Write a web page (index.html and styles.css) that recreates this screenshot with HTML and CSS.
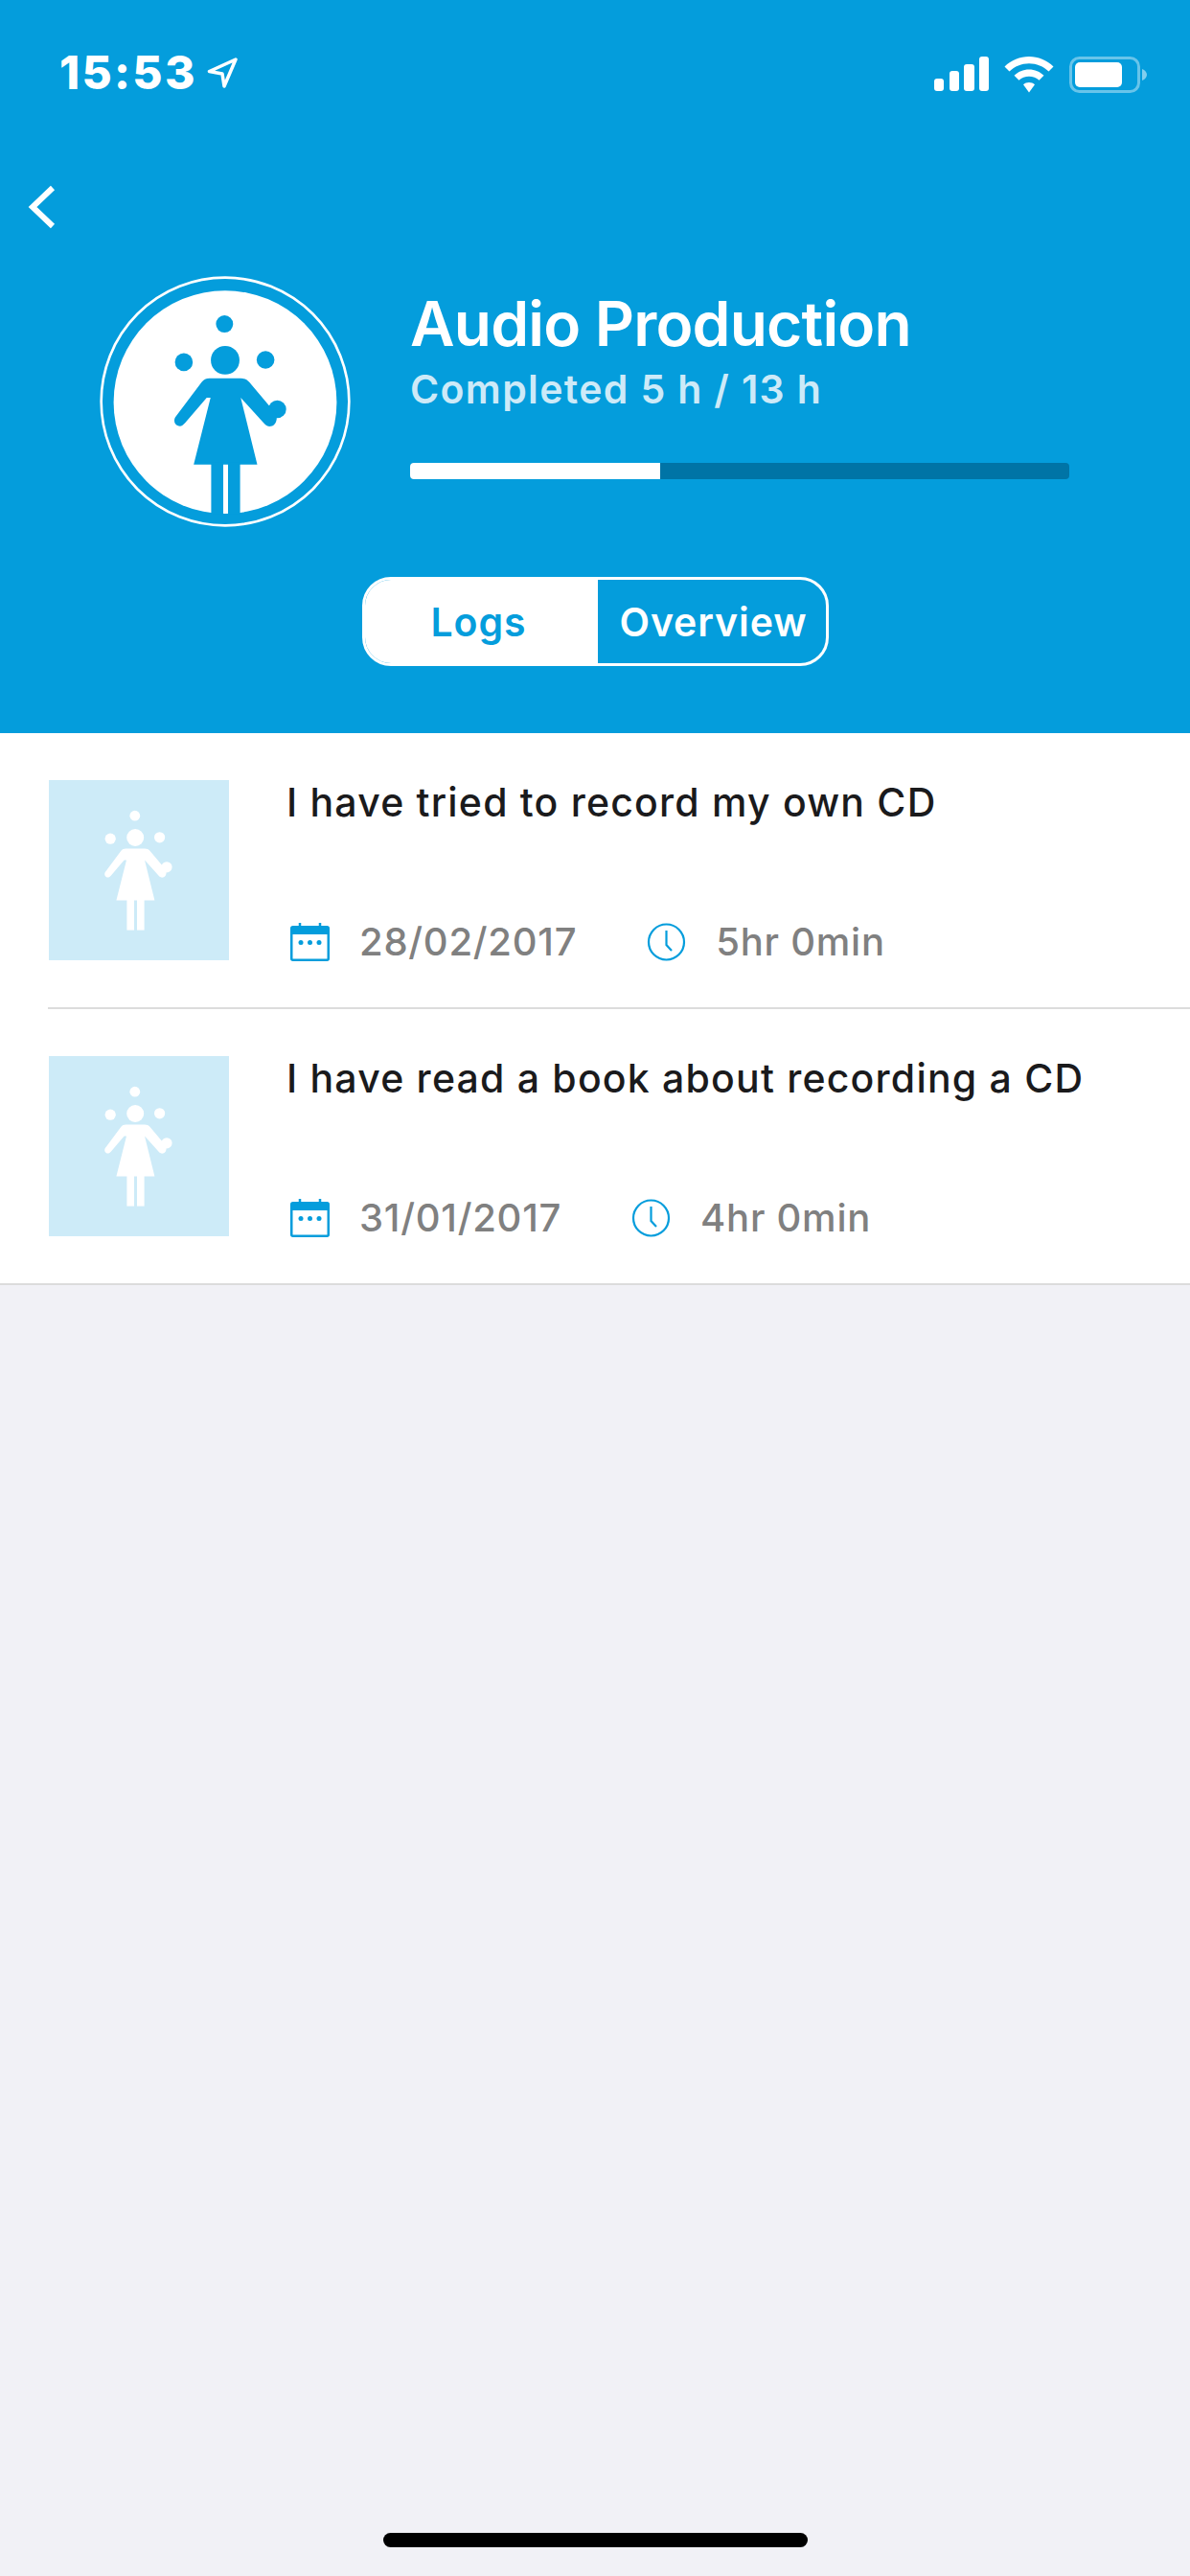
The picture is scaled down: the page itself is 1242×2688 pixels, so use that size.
FILE: index.html
```html
<!DOCTYPE html>
<html lang="en">
<head>
<meta charset="utf-8">
<title>Audio Production</title>
<link rel="stylesheet" href="styles.css">
</head>
<body>
<div class="screen">
  <header class="header">
    <div class="status">
      <div class="status-left">
        <span class="clock-time">15:53</span>
        <svg class="loc" viewBox="0 0 32 32"><path d="M30 2 L2.500 14.500 L16 17 L18 30 Z" fill="none" stroke="#fff" stroke-width="3.500" stroke-linejoin="round"/></svg>
      </div>
      <div class="status-right">
        <svg class="signal" viewBox="0 0 57 36"><rect x="0" y="23" width="10" height="13" rx="3"/><rect x="16" y="15" width="10" height="21" rx="3"/><rect x="31" y="8" width="11" height="28" rx="3"/><rect x="47" y="0" width="10" height="36" rx="3"/></svg>
        <svg class="wifi" viewBox="0 0 52 38"><path d="M26 0C35.500 0 44.500 3.800 51.500 10.500L46.500 15.500C41 10.200 33.800 7.200 26 7.200S11 10.200 5.500 15.500L0.500 10.500C7.500 3.800 16.500 0 26 0Z"/><path d="M26 13.500C32 13.500 37.500 15.800 41.500 19.800L36.500 24.800C33.700 22.200 30 20.700 26 20.700S18.300 22.200 15.500 24.800L10.500 19.800C14.500 15.800 20 13.500 26 13.500Z"/><path d="M26 27C28.300 27 30.300 27.800 32 29.300L26 37.500L20 29.300C21.700 27.800 23.700 27 26 27Z"/></svg>
        <svg class="battery" viewBox="0 0 82 38"><rect x="1.500" y="1.500" width="71" height="35" rx="9" fill="none" stroke="#fff" stroke-opacity=".4" stroke-width="3"/><rect x="6" y="6" width="49" height="26" rx="5" fill="#fff"/><path d="M76 13C79 14 81 16.500 81 19S79 24 76 25Z" fill="#fff" fill-opacity=".5"/></svg>
      </div>
    </div>
    <div class="back-row">
      <svg class="back" viewBox="0 0 30 46"><path d="M26 3 L5 23 L26 43" fill="none" stroke="#fff" stroke-width="6"/></svg>
    </div>
    <div class="hero">
      <svg class="logo" viewBox="39 39 790 790">
        <circle cx="434" cy="434" r="390" fill="none" stroke="#fff" stroke-width="8"/>
        <circle cx="434" cy="436" r="351" fill="#fff"/>
        <g id="juggler">
          <circle cx="432" cy="190" r="27"/>
          <circle cx="304" cy="310" r="28"/>
          <circle cx="561" cy="303" r="28"/>
          <circle cx="434" cy="304" r="45"/>
          <circle cx="598" cy="458" r="28"/>
          <path d="M385 361H483C495 361 503 365 510 373L590 468C603 484 594 510 578 512C568 513 561 508 555 501L483 422L535 632H335L388 422H376L308 501C302 508 295 513 288 511C274 508 270 492 279 481L360 373C367 365 373 361 385 361Z"/>
          <rect x="390" y="625" width="38" height="162"/>
          <rect x="443" y="625" width="38" height="162"/>
        </g>
      </svg>
      <div class="hero-info">
        <h1 class="hero-title">Audio Production</h1>
        <p class="hero-sub">Completed 5 h / 13 h</p>
        <div class="progress"><div class="progress-fill"></div></div>
      </div>
    </div>
    <div class="tabs">
      <div class="tab tab-active">Logs</div>
      <div class="tab">Overview</div>
    </div>
  </header>
  <main class="list">
    <article class="row">
      <svg class="thumb" viewBox="-17 4 940 940"><use href="#juggler"/></svg>
      <div class="row-body">
        <h2 class="row-title">I have tried to record my own CD</h2>
        <div class="meta">
          <svg class="meta-icon" viewBox="0 0 41 40"><path d="M10 0V5M31 0V5" stroke="#049ddc" stroke-width="2.500"/><rect x="1.250" y="4.250" width="38.500" height="34.500" rx="1.500" fill="none" stroke="#049ddc" stroke-width="2.500"/><rect x="1" y="4" width="39" height="8" fill="#049ddc"/><circle cx="11" cy="20.500" r="2.500" fill="#049ddc"/><circle cx="20.500" cy="20.500" r="2.500" fill="#049ddc"/><circle cx="30" cy="20.500" r="2.500" fill="#049ddc"/></svg>
          <span class="meta-text">28/02/2017</span>
          <svg class="meta-icon meta-clock" viewBox="0 0 41 40"><circle cx="20.500" cy="20" r="18.500" fill="none" stroke="#049ddc" stroke-width="2.200"/><path d="M20.500 8V23L26 29" fill="none" stroke="#049ddc" stroke-width="2.200"/></svg>
          <span class="meta-text">5hr 0min</span>
        </div>
      </div>
    </article>
    <article class="row">
      <svg class="thumb" viewBox="-17 4 940 940"><use href="#juggler"/></svg>
      <div class="row-body">
        <h2 class="row-title">I have read a book about recording a CD</h2>
        <div class="meta">
          <svg class="meta-icon" viewBox="0 0 41 40"><path d="M10 0V5M31 0V5" stroke="#049ddc" stroke-width="2.500"/><rect x="1.250" y="4.250" width="38.500" height="34.500" rx="1.500" fill="none" stroke="#049ddc" stroke-width="2.500"/><rect x="1" y="4" width="39" height="8" fill="#049ddc"/><circle cx="11" cy="20.500" r="2.500" fill="#049ddc"/><circle cx="20.500" cy="20.500" r="2.500" fill="#049ddc"/><circle cx="30" cy="20.500" r="2.500" fill="#049ddc"/></svg>
          <span class="meta-text">31/01/2017</span>
          <svg class="meta-icon meta-clock" viewBox="0 0 41 40"><circle cx="20.500" cy="20" r="18.500" fill="none" stroke="#049ddc" stroke-width="2.200"/><path d="M20.500 8V23L26 29" fill="none" stroke="#049ddc" stroke-width="2.200"/></svg>
          <span class="meta-text">4hr 0min</span>
        </div>
      </div>
    </article>
  </main>
  <div class="home-indicator"></div>
</div>
</body>
</html>
```
FILE: styles.css
```css
* { box-sizing: border-box; }
html, body { margin: 0; padding: 0; }
body { font-family: Inter, "Noto Sans", sans-serif; background: #f1f1f6; }
h1, h2, p { margin: 0; font-weight: inherit; }

.screen {
  position: relative;
  width: 1242px;
  height: 2688px;
  overflow: hidden;
  background: #f1f1f6;
}

.header {
  height: 765px;
  background: #049ddc;
  color: #fff;
  display: flex;
  flex-direction: column;
}

.status {
  height: 100px;
  padding: 51px 44px 0 62px;
  display: flex;
  justify-content: space-between;
  align-items: flex-start;
}
.status-left { display: flex; align-items: center; gap: 10px; }
.clock-time { font-size: 48px; font-weight: 800; line-height: 50px; height: 50px; letter-spacing: 2.3px; }
.loc { width: 32px; height: 32px; }
.status-right { display: flex; align-items: flex-start; padding-top: 8px; }
.signal { width: 57px; height: 36px; fill: #fff; margin-right: 16px; }
.wifi { width: 52px; height: 38px; fill: #fff; margin-right: 16px; }
.battery { width: 82px; height: 38px; }

.back-row { height: 90px; padding: 93px 0 0 29px; }
.back { display: block; width: 30px; height: 46px; }

.hero {
  margin-top: 95px;
  padding-left: 104px;
  display: flex;
  align-items: flex-start;
}
.logo { width: 262px; height: 262px; fill: #049ddc; flex: none; }
.hero-info { margin-left: 62px; width: 688px; padding-top: 11px; }
.hero-title { font-size: 64px; font-weight: 600; line-height: 78px; letter-spacing: -0.8px; }
.hero-sub { font-size: 41px; font-weight: 600; line-height: 50px; color: #cdeaf8; margin-top: 4px; letter-spacing: 1.35px; }
.progress {
  margin-top: 52px;
  height: 17px;
  border-radius: 4px;
  background: #0074a6;
  overflow: hidden;
}
.progress-fill { width: 38%; height: 100%; background: #fff; }

.tabs {
  margin: 52px 0 0 378px;
  width: 487px;
  height: 93px;
  border: 3px solid #fff;
  border-radius: 30px;
  overflow: hidden;
  display: flex;
}
.tab {
  display: flex;
  align-items: center;
  justify-content: center;
  padding-left: 3px;
  font-size: 41px;
  font-weight: 600;
  letter-spacing: 0.9px;
  flex: 1;
}
.tab-active { flex: none; width: 243px; padding: 0 6px 0 0; background: #fff; color: #049ddc; }

.list { background: #fff; }
.row {
  height: 288px;
  padding-top: 49px;
  display: flex;
  align-items: flex-start;
  margin-left: 50px;
  border-bottom: 2px solid #dcdcdc;
}
.row:last-child { margin-left: 0; padding-left: 50px; }
.thumb { width: 188px; height: 188px; margin-left: 1px; background: #cdebf8; fill: #fff; flex: none; display: block; }
.row-body { margin-left: 60px; }
.row-title { font-size: 41px; font-weight: 550; line-height: 50px; letter-spacing: 1.2px; color: #1a1a1c; margin-top: -2px; }
.meta { display: flex; align-items: center; margin-top: 99px; margin-left: 4px; }
.meta-icon { width: 41px; height: 40px; flex: none; }
.meta-clock { margin-left: 73px; }
.meta-text { margin-left: 31px; font-size: 40px; font-weight: 550; line-height: 44px; letter-spacing: 0.75px; color: #808080; }

.home-indicator {
  position: absolute;
  left: 400px;
  bottom: 30px;
  width: 443px;
  height: 15px;
  border-radius: 8px;
  background: #000;
}
```
